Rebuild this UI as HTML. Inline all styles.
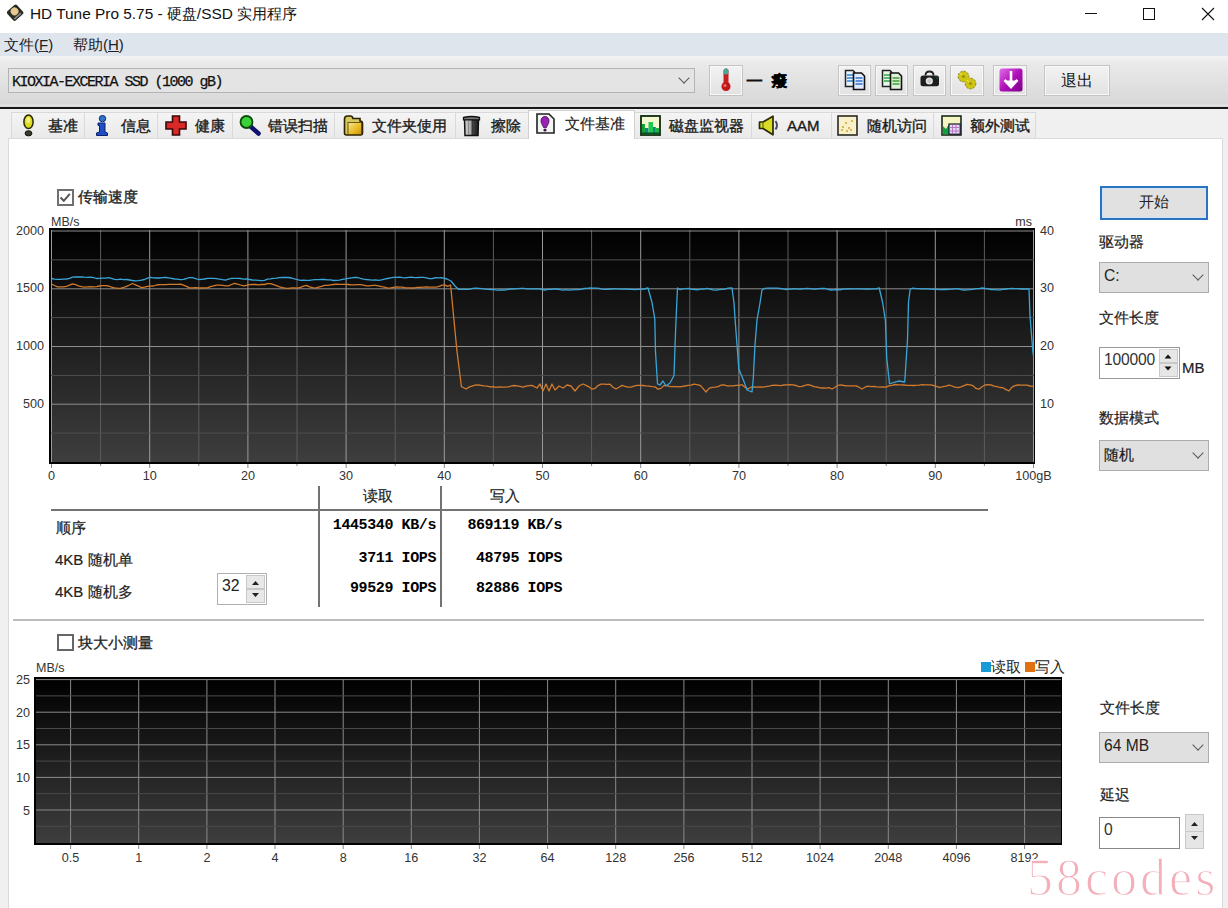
<!DOCTYPE html>
<html><head><meta charset="utf-8">
<style>
*{box-sizing:border-box}
html,body{margin:0;padding:0}
body{width:1228px;height:908px;overflow:hidden;background:#f0f0f0;position:relative;font-family:"Liberation Sans",sans-serif;color:#000;font-size:15px}
.a{position:absolute;white-space:nowrap}
#title{left:0;top:0;width:1228px;height:33px;background:#fff}
#menu{left:0;top:33px;width:1228px;height:23px;background:#dfe5ec}
#tool{left:0;top:56px;width:1228px;height:51px;background:linear-gradient(#f3f3f3 0px,#f0f0f0 4px,#ebebeb 5px,#d8d8d8 48px,#e6e6e6 49px,#d6d6d6 51px)}
#darkline{left:0;top:107px;width:1228px;height:2px;background:#181818}
#panel{left:8px;top:138px;width:1215px;height:780px;background:#fff;border:1px solid #dadada}
.tab{position:absolute;top:112px;height:27px;background:linear-gradient(#f4f4f4,#e9e9e9);border:1px solid #d9d9d9;border-bottom:none}
.tab.act{top:110px;height:29px;background:#fff;border-color:#d0d0d0}
.tabt{position:absolute;top:4px;font-size:15px;color:#222}
.btn{position:absolute;border:1px solid #c4c4c4;background:linear-gradient(#f2f2f2,#e2e2e2);box-shadow:inset 0 0 0 1px #f8f8f8}
.combo{position:absolute;background:#e0e0e0;border:1px solid #ababab}
.chev{position:absolute;width:8px;height:8px;border-right:1.7px solid #585858;border-bottom:1.7px solid #585858;transform:rotate(45deg)}
.lbl{font-size:15px;color:#222;-webkit-text-stroke:0.2px #222}
.mono{font-family:"Liberation Mono",monospace;font-weight:bold}
</style></head><body>
<div id="title" class="a"></div>
<!-- title icon -->
<svg class="a" style="left:5px;top:4px" width="20" height="18" viewBox="0 0 20 18">
<g transform="rotate(-42 10 8.5)"><rect x="3.5" y="2.5" width="13" height="12.5" rx="2" fill="#2a2a22"/><circle cx="10.5" cy="7.3" r="3.9" fill="#e6c890"/><rect x="5" y="12" width="9" height="1.8" fill="#888"/></g></svg>
<div class="a" style="left:30px;top:4px;font-size:15.4px;color:#111">HD Tune Pro 5.75 - 硬盘/SSD 实用程序</div>
<svg class="a" style="left:1080px;top:0" width="148" height="30" viewBox="1080 0 148 30">
<line x1="1085" y1="13.5" x2="1097" y2="13.5" stroke="#111" stroke-width="1"/>
<rect x="1143.5" y="8.5" width="11" height="11" fill="none" stroke="#111" stroke-width="1"/>
<path d="M1202 8 L1214 20 M1214 8 L1202 20" stroke="#111" stroke-width="1.1"/>
</svg>
<div id="menu" class="a"></div>
<div class="a" style="left:4px;top:36px;font-size:15px;color:#222">文件(<u>F</u>)</div>
<div class="a" style="left:73px;top:36px;font-size:15px;color:#222">帮助(<u>H</u>)</div>
<div id="tool" class="a"></div>
<!-- drive combo -->
<div class="combo" style="left:8px;top:68px;width:687px;height:25px;background:#e4e4e4;border-color:#b4b4b4"></div>
<div class="a mono" style="left:12px;top:74px;font-size:15px;color:#111;letter-spacing:-1.5px;font-weight:normal;-webkit-text-stroke:0.25px #111">KIOXIA-EXCERIA SSD (1000 gB)</div>
<div class="chev" style="left:680px;top:74px"></div>
<!-- thermometer button -->
<div class="btn" style="left:709px;top:65px;width:34px;height:31px"></div>
<svg class="a" style="left:718px;top:67px" width="16" height="25" viewBox="0 0 16 25">
<rect x="5.5" y="1.5" width="5" height="17" rx="2.5" fill="#c42020"/><rect x="5.5" y="1.5" width="5" height="6" rx="2.5" fill="#4aa898"/><circle cx="8" cy="19.5" r="4.5" fill="#c01818"/><circle cx="7" cy="18.5" r="1.5" fill="#f07070"/></svg>
<div class="a" style="left:746px;top:70px;font-size:17px;font-weight:bold;color:#111">一</div>
<div class="a" style="left:772px;top:72px;font-size:15px;font-weight:bold;color:#000;-webkit-text-stroke:0.6px #000">癈</div>
<!-- toolbar buttons -->
<div class="btn" style="left:838px;top:65px;width:33px;height:31px"></div>
<div class="btn" style="left:875px;top:65px;width:33px;height:31px"></div>
<div class="btn" style="left:913px;top:65px;width:33px;height:31px"></div>
<div class="btn" style="left:950px;top:65px;width:34px;height:31px"></div>
<div class="btn" style="left:993px;top:65px;width:34px;height:31px"></div>
<div class="btn" style="left:1044px;top:65px;width:66px;height:31px"></div>
<div class="a" style="left:1061px;top:71px;font-size:16px;color:#111">退出</div>

<svg class="a" style="left:844px;top:69px" width="22" height="22" viewBox="0 0 22 22"><path d="M1.5 1.5 L9 1.5 L10.5 3 L10.5 17.5 L1.5 17.5 Z" fill="#e8f4ff" stroke="#222" stroke-width="1.5"/><path d="M3 6 L9 6 M3 9 L9 9 M3 12 L9 12" stroke="#3080d0" stroke-width="1.3"/><path d="M9.5 4 L17.5 4 L20.5 7 L20.5 20.5 L9.5 20.5 Z" fill="#dfeaff" stroke="#111" stroke-width="1.6"/><path d="M11.5 9 L18.5 9 M11.5 12 L18.5 12 M11.5 15 L18.5 15" stroke="#2f70c8" stroke-width="1.3"/></svg>
<svg class="a" style="left:881px;top:69px" width="22" height="22" viewBox="0 0 22 22"><path d="M1.5 1.5 L9 1.5 L10.5 3 L10.5 17.5 L1.5 17.5 Z" fill="#e8f8e8" stroke="#222" stroke-width="1.5"/><path d="M3 6 L9 6 M3 9 L9 9 M3 12 L9 12" stroke="#30a040" stroke-width="1.5"/><path d="M9.5 4 L17.5 4 L20.5 7 L20.5 20.5 L9.5 20.5 Z" fill="#e0f0d8" stroke="#111" stroke-width="1.6"/><path d="M11.5 9 L18.5 9 M11.5 12 L18.5 12 M11.5 15 L18.5 15" stroke="#38a030" stroke-width="1.5"/></svg>
<svg class="a" style="left:919px;top:70px" width="22" height="18" viewBox="0 0 22 18"><path d="M6.5 5.5 Q6.5 1.5 10.5 1.5 Q14.5 1.5 14.5 5.5" fill="none" stroke="#222" stroke-width="1.8"/><rect x="1.5" y="5.5" width="18.5" height="10.8" rx="2.5" fill="#1e1e1e"/><path d="M15 6.5 L19.5 6.5 L19.5 10 Z" fill="#1a4030"/><circle cx="10.3" cy="11" r="3.6" fill="#e4e4e4"/><circle cx="10.3" cy="11" r="2" fill="#c8c8c8"/></svg>
<svg class="a" style="left:955px;top:69px" width="24" height="22" viewBox="0 0 24 22"><g stroke="#7a7400" stroke-width="1" fill="#cfc414"><circle cx="8.5" cy="7.5" r="5.3" stroke-dasharray="2.2 1.3"/><circle cx="15.5" cy="14.5" r="5.3" stroke-dasharray="2.2 1.3"/></g><g fill="#cfc414"><circle cx="8.5" cy="7.5" r="4.8"/><circle cx="15.5" cy="14.5" r="4.8"/><rect x="9" y="8" width="6" height="6" transform="rotate(45 12 11)"/></g><g fill="#8a8000" opacity="0.7"><circle cx="8.5" cy="7.5" r="1.6"/><circle cx="15.5" cy="14.5" r="1.6"/></g><path d="M5 4 L7 6 M12 11 L14 13" stroke="#f0ec60" stroke-width="1"/></svg>
<svg class="a" style="left:999px;top:68px" width="24" height="24" viewBox="0 0 24 24"><defs><linearGradient id="pg" x1="0" y1="0" x2="1" y2="1"><stop offset="0" stop-color="#e070e8"/><stop offset="0.5" stop-color="#b010b8"/><stop offset="1" stop-color="#7a0088"/></linearGradient></defs><rect x="0.5" y="0.5" width="23" height="23" rx="2.5" fill="url(#pg)"/><path d="M12 3 L12 17 M5.5 12 L12 19 L18.5 12" fill="none" stroke="#fff" stroke-width="2.6"/><path d="M6 12.5 L12 20 L18 12.5 Z" fill="#fff"/></svg>

<div id="darkline" class="a"></div>
<!-- tabs -->
<div class="tab" style="left:11px;width:73.5px"></div><div class="a lbl" style="left:47.6px;top:117px;color:#1a1a1a;-webkit-text-stroke:0.35px #1a1a1a">基准</div><svg class="a" style="left:22px;top:114px" width="13" height="23" viewBox="0 0 13 23"><ellipse cx="6.5" cy="7.8" rx="4.6" ry="6.8" fill="#dede20" stroke="#2a2a08" stroke-width="1.5"/><ellipse cx="6.3" cy="6" rx="2" ry="3" fill="#f4f080"/><ellipse cx="6.5" cy="19.3" rx="3.4" ry="2.6" fill="#3a3a2a" stroke="#111" stroke-width="1"/></svg><div class="tab" style="left:83.5px;width:74.5px"></div><div class="a lbl" style="left:120.5px;top:117px;color:#1a1a1a;-webkit-text-stroke:0.35px #1a1a1a">信息</div><svg class="a" style="left:95px;top:115px" width="14" height="21" viewBox="0 0 14 21"><circle cx="7.5" cy="3.6" r="3.2" fill="#2f74c8" stroke="#0c2a70" stroke-width="1"/><path d="M3 8 L10 8 L10 17 L12.5 18 L12.5 20.5 L1.5 20.5 L1.5 18 L4.5 17 L4.5 10.5 L3 10.5 Z" fill="#1e4fc0" stroke="#0a1f70" stroke-width="1"/></svg><div class="tab" style="left:157px;width:76px"></div><div class="a lbl" style="left:195px;top:117px;color:#1a1a1a;-webkit-text-stroke:0.35px #1a1a1a">健康</div><svg class="a" style="left:165px;top:115px" width="22" height="21" viewBox="0 0 22 21"><path d="M7.5 1 L14.5 1 L14.5 7 L21 7 L21 14 L14.5 14 L14.5 20 L7.5 20 L7.5 14 L1 14 L1 7 L7.5 7 Z" fill="#d82828" stroke="#3a0808" stroke-width="1.6"/></svg><div class="tab" style="left:232px;width:102.5px"></div><div class="a lbl" style="left:268.4px;top:117px;color:#1a1a1a;-webkit-text-stroke:0.35px #1a1a1a">错误扫描</div><svg class="a" style="left:239px;top:115px" width="23" height="21" viewBox="0 0 23 21"><path d="M11 11 L19.5 18.5" stroke="#101070" stroke-width="4.5" stroke-linecap="round"/><circle cx="7.5" cy="7" r="6" fill="#3cd03c" stroke="#0a4a0a" stroke-width="1.8"/></svg><div class="tab" style="left:333.5px;width:122.5px"></div><div class="a lbl" style="left:372.2px;top:117px;color:#1a1a1a;-webkit-text-stroke:0.35px #1a1a1a">文件夹使用</div><svg class="a" style="left:343px;top:115px" width="21" height="21" viewBox="0 0 21 21"><defs><linearGradient id="fg" x1="0" y1="0" x2="1" y2="1"><stop offset="0" stop-color="#f8e890"/><stop offset="0.6" stop-color="#e8b820"/><stop offset="1" stop-color="#c09010"/></linearGradient></defs><path d="M1.5 4 Q1.5 1 4.5 1 L7.5 1 Q9.5 1 10 3.5 L17 3.5 L17 6 Q19.5 6 19.5 8.5 L19.5 18 Q19.5 20 17.5 20 L3.5 20 Q1.5 20 1.5 18 Z" fill="#d8c860" stroke="#2a2200" stroke-width="1.6"/><rect x="5" y="7.5" width="13.5" height="12" fill="url(#fg)" stroke="#4a3a00" stroke-width="0.8"/></svg><div class="tab" style="left:455px;width:74px"></div><div class="a lbl" style="left:491.4px;top:117px;color:#1a1a1a;-webkit-text-stroke:0.35px #1a1a1a">擦除</div><svg class="a" style="left:462px;top:115px" width="19" height="22" viewBox="0 0 19 22"><defs><linearGradient id="tg" x1="0" y1="0" x2="1" y2="0"><stop offset="0" stop-color="#d0d0d0"/><stop offset="0.45" stop-color="#a8a8a8"/><stop offset="0.55" stop-color="#3a3a3a"/><stop offset="1" stop-color="#222"/></linearGradient></defs><path d="M2.5 4 L16.5 4 L16 20.5 L3 20.5 Z" fill="url(#tg)" stroke="#111" stroke-width="1.5"/><path d="M1.5 2.5 Q9.5 0.5 17.5 2.5 L17.5 4.8 L1.5 4.8 Z" fill="#777" stroke="#111" stroke-width="1.3"/><path d="M6.5 6 L6.5 19.5 M12 6 L12 19.5" stroke="#555" stroke-width="0.8" opacity="0.6"/></svg><div class="tab" style="left:634px;width:118px"></div><div class="a lbl" style="left:669px;top:117px;color:#1a1a1a;-webkit-text-stroke:0.35px #1a1a1a">磁盘监视器</div><svg class="a" style="left:640px;top:115px" width="21" height="21" viewBox="0 0 21 21"><rect x="1" y="1" width="19" height="19" fill="#f4f8d0" stroke="#0e2a0e" stroke-width="1.8"/><rect x="1.9" y="9" width="3" height="10.2" fill="#10a030"/><rect x="4.9" y="13" width="3.6" height="6.2" fill="#108880"/><rect x="8.5" y="7" width="4.5" height="12.2" fill="#20c850"/><rect x="13" y="12" width="2.8" height="7.2" fill="#108878"/><rect x="15.8" y="13" width="3.3" height="6.2" fill="#20b048"/><rect x="1.9" y="17.5" width="17.2" height="1.7" fill="#0a4a20"/></svg><div class="tab" style="left:751px;width:80.5px"></div><div class="a lbl" style="left:787px;top:117px;color:#1a1a1a;-webkit-text-stroke:0.35px #1a1a1a">AAM</div><svg class="a" style="left:758px;top:115px" width="23" height="21" viewBox="0 0 23 21"><path d="M1.5 7 L5 7 L15 1.2 L15 19.8 L5 13.5 L1.5 13.5 Z" fill="#d8dc28" stroke="#2a2a08" stroke-width="1.7" stroke-linejoin="round"/><path d="M5 7.5 L5 13" stroke="#5a5a10" stroke-width="1"/><path d="M17.5 6 Q20.5 10.3 17.5 14.5" fill="none" stroke="#4a4a60" stroke-width="2"/></svg><div class="tab" style="left:830.5px;width:103.0px"></div><div class="a lbl" style="left:866.8px;top:117px;color:#1a1a1a;-webkit-text-stroke:0.35px #1a1a1a">随机访问</div><svg class="a" style="left:837px;top:115px" width="21" height="21" viewBox="0 0 21 21"><rect x="1" y="1" width="19" height="19" fill="#f8f0c8" stroke="#2a2a20" stroke-width="1.6"/><g fill="#d0a030"><circle cx="6" cy="12" r="1"/><circle cx="9" cy="8" r="1"/><circle cx="12" cy="13" r="1"/><circle cx="15" cy="6" r="1"/><circle cx="14" cy="15" r="1"/><circle cx="5" cy="15" r="1"/><circle cx="10" cy="16" r="1"/></g></svg><div class="tab" style="left:932.5px;width:103.5px"></div><div class="a lbl" style="left:970.2px;top:117px;color:#1a1a1a;-webkit-text-stroke:0.35px #1a1a1a">额外测试</div><svg class="a" style="left:941px;top:115px" width="21" height="21" viewBox="0 0 21 21"><rect x="1" y="1" width="19" height="19" fill="#f4f4c0" stroke="#1a2a1a" stroke-width="1.6"/><path d="M1.8 19.2 L1.8 11 L5 14 L8 9 L8 19.2 Z" fill="#10a040"/><rect x="8" y="9" width="11.2" height="10.2" fill="#e8d8f0" stroke="#1a1a30" stroke-width="1.2"/><path d="M11.5 10 L11.5 19 M15 10 L15 19 M8.5 12.5 L19 12.5 M8.5 16 L19 16" stroke="#b070c0" stroke-width="0.9"/></svg>
<div id="panel" class="a"></div>
<!-- active tab drawn over panel top border -->
<div class="tab act" style="left:528px;width:107px;border-bottom:none"></div><div class="a lbl" style="left:564.7px;top:115px;color:#222">文件基准</div><svg class="a" style="left:536px;top:113px" width="19" height="21" viewBox="0 0 19 21"><path d="M1 1 L13 1 L18 6 L18 20 L1 20 Z" fill="#f4f4f4" stroke="#222" stroke-width="1.6"/><path d="M9 3.5 C12 3.5 13 6 13 8 C13 10.5 11 12.5 10.5 14.5 L7.5 14.5 C7 12.5 5 10.5 5 8 C5 6 6 3.5 9 3.5Z" fill="#9a20b8" stroke="#40104a" stroke-width="0.8"/><circle cx="9" cy="17" r="1.6" fill="#40104a"/></svg>
<!-- checkbox 1 -->
<div class="a" style="left:57px;top:189px;width:16.5px;height:16.5px;border:2px solid #707070;background:#fff"></div>
<svg class="a" style="left:57px;top:189px" width="16" height="16"><path d="M3.5 8.5 L6.8 11.8 L12.8 4.8" fill="none" stroke="#555" stroke-width="2"/></svg>
<div class="a lbl" style="left:78px;top:188px;-webkit-text-stroke:0.35px #222">传输速度</div>
<svg class="a" style="left:0;top:0" width="1228" height="908" viewBox="0 0 1228 908">
<defs><linearGradient id="cg" x1="0" y1="0" x2="0" y2="1"><stop offset="0" stop-color="#000"/><stop offset="1" stop-color="#3e3e3e"/></linearGradient></defs>
<rect x="49" y="228" width="986" height="236" fill="#000"/>
<rect x="51" y="230" width="983" height="232" fill="url(#cg)"/>
<line x1="51.5" y1="230" x2="51.5" y2="462" stroke="#9a9a9a" stroke-width="1"/>
<line x1="51.5" y1="464" x2="51.5" y2="468" stroke="#888" stroke-width="1"/>
<line x1="100.6" y1="230" x2="100.6" y2="462" stroke="#5c5c5c" stroke-width="1"/>
<line x1="100.6" y1="464" x2="100.6" y2="466" stroke="#888" stroke-width="1"/>
<line x1="149.7" y1="230" x2="149.7" y2="462" stroke="#9a9a9a" stroke-width="1"/>
<line x1="149.7" y1="464" x2="149.7" y2="468" stroke="#888" stroke-width="1"/>
<line x1="198.8" y1="230" x2="198.8" y2="462" stroke="#5c5c5c" stroke-width="1"/>
<line x1="198.8" y1="464" x2="198.8" y2="466" stroke="#888" stroke-width="1"/>
<line x1="247.9" y1="230" x2="247.9" y2="462" stroke="#9a9a9a" stroke-width="1"/>
<line x1="247.9" y1="464" x2="247.9" y2="468" stroke="#888" stroke-width="1"/>
<line x1="297.0" y1="230" x2="297.0" y2="462" stroke="#5c5c5c" stroke-width="1"/>
<line x1="297.0" y1="464" x2="297.0" y2="466" stroke="#888" stroke-width="1"/>
<line x1="346.1" y1="230" x2="346.1" y2="462" stroke="#9a9a9a" stroke-width="1"/>
<line x1="346.1" y1="464" x2="346.1" y2="468" stroke="#888" stroke-width="1"/>
<line x1="395.2" y1="230" x2="395.2" y2="462" stroke="#5c5c5c" stroke-width="1"/>
<line x1="395.2" y1="464" x2="395.2" y2="466" stroke="#888" stroke-width="1"/>
<line x1="444.3" y1="230" x2="444.3" y2="462" stroke="#9a9a9a" stroke-width="1"/>
<line x1="444.3" y1="464" x2="444.3" y2="468" stroke="#888" stroke-width="1"/>
<line x1="493.4" y1="230" x2="493.4" y2="462" stroke="#5c5c5c" stroke-width="1"/>
<line x1="493.4" y1="464" x2="493.4" y2="466" stroke="#888" stroke-width="1"/>
<line x1="542.5" y1="230" x2="542.5" y2="462" stroke="#9a9a9a" stroke-width="1"/>
<line x1="542.5" y1="464" x2="542.5" y2="468" stroke="#888" stroke-width="1"/>
<line x1="591.6" y1="230" x2="591.6" y2="462" stroke="#5c5c5c" stroke-width="1"/>
<line x1="591.6" y1="464" x2="591.6" y2="466" stroke="#888" stroke-width="1"/>
<line x1="640.7" y1="230" x2="640.7" y2="462" stroke="#9a9a9a" stroke-width="1"/>
<line x1="640.7" y1="464" x2="640.7" y2="468" stroke="#888" stroke-width="1"/>
<line x1="689.8" y1="230" x2="689.8" y2="462" stroke="#5c5c5c" stroke-width="1"/>
<line x1="689.8" y1="464" x2="689.8" y2="466" stroke="#888" stroke-width="1"/>
<line x1="738.9" y1="230" x2="738.9" y2="462" stroke="#9a9a9a" stroke-width="1"/>
<line x1="738.9" y1="464" x2="738.9" y2="468" stroke="#888" stroke-width="1"/>
<line x1="788.0" y1="230" x2="788.0" y2="462" stroke="#5c5c5c" stroke-width="1"/>
<line x1="788.0" y1="464" x2="788.0" y2="466" stroke="#888" stroke-width="1"/>
<line x1="837.1" y1="230" x2="837.1" y2="462" stroke="#9a9a9a" stroke-width="1"/>
<line x1="837.1" y1="464" x2="837.1" y2="468" stroke="#888" stroke-width="1"/>
<line x1="886.2" y1="230" x2="886.2" y2="462" stroke="#5c5c5c" stroke-width="1"/>
<line x1="886.2" y1="464" x2="886.2" y2="466" stroke="#888" stroke-width="1"/>
<line x1="935.3" y1="230" x2="935.3" y2="462" stroke="#9a9a9a" stroke-width="1"/>
<line x1="935.3" y1="464" x2="935.3" y2="468" stroke="#888" stroke-width="1"/>
<line x1="984.4" y1="230" x2="984.4" y2="462" stroke="#5c5c5c" stroke-width="1"/>
<line x1="984.4" y1="464" x2="984.4" y2="466" stroke="#888" stroke-width="1"/>
<line x1="1033.5" y1="230" x2="1033.5" y2="462" stroke="#9a9a9a" stroke-width="1"/>
<line x1="1033.5" y1="464" x2="1033.5" y2="468" stroke="#888" stroke-width="1"/>
<line x1="51" y1="433.1" x2="1034" y2="433.1" stroke="#4e4e4e" stroke-width="1"/>
<line x1="51" y1="404.2" x2="1034" y2="404.2" stroke="#8e8e8e" stroke-width="1"/>
<line x1="51" y1="375.4" x2="1034" y2="375.4" stroke="#4e4e4e" stroke-width="1"/>
<line x1="51" y1="346.5" x2="1034" y2="346.5" stroke="#8e8e8e" stroke-width="1"/>
<line x1="51" y1="317.6" x2="1034" y2="317.6" stroke="#4e4e4e" stroke-width="1"/>
<line x1="51" y1="288.8" x2="1034" y2="288.8" stroke="#8e8e8e" stroke-width="1"/>
<line x1="51" y1="259.9" x2="1034" y2="259.9" stroke="#4e4e4e" stroke-width="1"/>
<line x1="51" y1="231.0" x2="1034" y2="231.0" stroke="#8e8e8e" stroke-width="1"/>
<polyline points="51.5,284.0 54.5,285.5 57.5,286.9 60.5,286.9 63.5,286.8 66.5,286.3 69.5,285.2 72.5,283.8 75.5,284.6 78.5,285.8 81.5,286.7 84.5,287.1 87.5,286.9 90.5,286.7 93.5,286.9 96.5,286.6 99.5,286.0 102.5,285.7 105.5,285.7 108.5,286.0 111.5,287.1 114.5,287.8 117.5,288.1 120.5,288.3 123.5,287.5 126.5,286.4 129.5,285.0 132.5,283.5 135.5,284.8 138.5,286.2 141.5,287.6 144.5,287.1 147.5,286.4 150.5,286.1 153.5,286.0 156.5,285.0 159.5,284.7 162.5,284.6 165.5,284.7 168.5,284.3 171.5,284.4 174.5,284.3 177.5,284.3 180.5,284.2 183.5,285.1 186.5,286.4 189.5,287.8 192.5,287.9 195.5,287.6 198.5,287.8 201.5,288.0 204.5,287.9 207.5,287.9 210.5,286.6 213.5,285.8 216.5,285.1 219.5,285.1 222.5,285.4 225.5,285.8 228.5,285.8 231.5,284.5 234.5,283.3 237.5,284.1 240.5,285.0 243.5,285.9 246.5,285.3 249.5,284.7 252.5,284.4 255.5,284.5 258.5,284.9 261.5,284.5 264.5,284.5 267.5,283.7 270.5,283.7 273.5,284.7 276.5,285.7 279.5,286.8 282.5,287.7 285.5,288.1 288.5,288.3 291.5,287.9 294.5,287.9 297.5,288.1 300.5,287.3 303.5,286.1 306.5,285.4 309.5,286.8 312.5,287.6 315.5,288.1 318.5,287.1 321.5,286.4 324.5,285.3 327.5,285.3 330.5,284.9 333.5,284.5 336.5,284.1 339.5,284.3 342.5,284.4 345.5,284.4 348.5,284.5 351.5,284.9 354.5,284.9 357.5,284.7 360.5,284.6 363.5,285.2 366.5,285.9 369.5,285.8 372.5,285.4 375.5,285.3 378.5,285.8 381.5,286.7 384.5,287.1 387.5,288.1 390.5,287.8 393.5,287.3 396.5,286.8 399.5,287.1 402.5,287.1 405.5,287.8 408.5,287.9 411.5,288.0 414.5,287.9 417.5,287.3 420.5,287.4 423.5,287.2 426.5,287.0 429.5,287.1 432.5,287.2 435.5,287.2 438.5,286.6 441.5,285.4 444.5,284.9 447.5,286.4 450.6,285.0 453.3,313.0 456.9,350.6 461.4,386.5 466.0,389.0 469.0,387.1 472.0,386.1 475.0,385.1 478.0,385.0 481.0,385.3 484.0,385.8 487.0,386.1 490.0,386.8 493.0,386.6 496.0,387.3 499.0,386.9 502.0,387.1 505.0,387.2 508.0,386.8 511.0,386.2 514.0,385.5 517.0,385.9 520.0,386.4 523.0,387.2 526.0,386.2 529.0,385.7 532.0,385.4 537.0,388.0 540.0,384.0 543.0,391.0 546.0,384.0 549.0,391.0 552.0,384.0 555.0,390.0 559.0,386.0 563.0,388.0 567.0,385.0 571.0,386.0 575.0,391.0 579.0,386.0 583.0,384.0 586.0,385.4 589.0,386.8 592.0,389.2 595.0,388.4 598.0,385.6 601.0,384.2 604.0,384.2 607.0,384.3 610.0,384.2 613.0,387.2 616.0,389.0 619.0,387.2 622.0,385.4 625.0,386.4 628.0,387.1 631.0,387.2 634.0,386.1 637.0,385.4 640.0,385.4 643.0,385.5 646.0,385.9 649.0,386.2 652.0,386.7 655.0,386.8 658.0,389.2 661.0,388.4 664.0,385.4 667.0,385.6 670.0,386.6 673.0,386.7 676.0,386.6 679.0,386.8 682.0,386.5 685.0,386.0 688.0,385.4 691.0,385.1 694.0,384.1 697.0,384.7 700.0,385.3 703.0,388.4 706.0,392.0 709.0,388.4 712.0,387.4 715.0,387.2 718.0,386.6 721.0,385.2 724.0,384.9 727.0,385.8 730.0,385.8 733.0,385.9 736.0,385.4 739.0,385.3 742.0,384.7 745.0,387.2 748.0,389.0 751.0,387.2 754.0,387.0 757.0,387.2 760.0,386.8 763.0,387.2 766.0,386.7 769.0,386.2 772.0,385.4 775.0,385.2 778.0,385.4 781.0,385.7 784.0,385.0 787.0,384.9 790.0,384.7 793.0,384.8 796.0,385.5 799.0,386.6 802.0,386.4 805.0,385.3 808.0,384.6 811.0,385.3 814.0,386.6 817.0,387.0 820.0,387.9 823.0,388.0 826.0,388.1 829.0,387.7 832.0,389.0 835.0,387.2 838.0,385.3 841.0,384.8 844.0,385.5 847.0,385.8 850.0,385.8 853.0,385.8 856.0,385.8 859.0,387.2 862.0,389.0 865.0,387.2 868.0,386.2 871.0,386.6 874.0,386.4 877.0,386.9 880.0,387.2 883.0,387.0 886.0,387.2 889.0,385.8 892.0,385.3 895.0,384.5 898.0,384.8 901.0,384.8 904.0,385.0 907.0,385.3 910.0,385.3 913.0,385.5 916.0,385.4 919.0,385.2 922.0,384.7 925.0,384.9 928.0,384.9 931.0,384.8 934.0,385.6 937.0,386.7 940.0,387.5 943.0,386.6 946.0,386.1 949.0,385.1 952.0,386.0 955.0,387.1 958.0,387.6 961.0,386.8 964.0,385.6 967.0,384.4 970.0,384.8 973.0,385.7 976.0,388.4 979.0,389.2 982.0,386.8 985.0,385.0 988.0,384.7 991.0,384.8 994.0,386.2 997.0,386.6 1000.0,387.5 1003.0,387.7 1006.0,389.6 1009.0,390.8 1012.0,387.2 1015.0,385.7 1018.0,385.0 1021.0,385.1 1024.0,385.2 1027.0,385.2 1030.0,386.0 1033.0,386.4" fill="none" stroke="#d27a2c" stroke-width="1.3" stroke-linejoin="round"/>
<polyline points="51.5,278.5 54.5,279.1 57.5,279.3 60.5,279.4 63.5,279.2 66.5,279.0 69.5,278.3 72.5,277.1 75.5,277.0 78.5,277.0 81.5,277.0 84.5,277.2 87.5,277.3 90.5,277.1 93.5,277.6 96.5,278.5 99.5,278.4 102.5,278.2 105.5,278.1 108.5,277.7 111.5,278.4 114.5,279.3 117.5,279.6 120.5,279.2 123.5,279.6 126.5,279.5 129.5,280.0 132.5,280.5 135.5,280.8 138.5,280.6 141.5,280.2 144.5,279.5 147.5,278.1 150.5,277.4 153.5,277.8 156.5,278.0 159.5,278.0 162.5,277.7 165.5,277.5 168.5,277.8 171.5,278.3 174.5,279.0 177.5,279.2 180.5,279.6 183.5,279.3 186.5,278.5 189.5,277.6 192.5,277.6 195.5,278.6 198.5,279.5 201.5,279.4 204.5,279.0 207.5,278.3 210.5,278.4 213.5,278.4 216.5,278.6 219.5,279.2 222.5,279.7 225.5,280.1 228.5,279.1 231.5,278.4 234.5,278.3 237.5,278.3 240.5,278.5 243.5,279.1 246.5,279.0 249.5,279.5 252.5,280.0 255.5,280.2 258.5,280.4 261.5,280.6 264.5,280.4 267.5,279.2 270.5,278.8 273.5,278.3 276.5,278.2 279.5,277.6 282.5,277.3 285.5,277.5 288.5,277.5 291.5,278.0 294.5,278.9 297.5,279.7 300.5,280.3 303.5,280.1 306.5,280.4 309.5,280.3 312.5,279.9 315.5,279.6 318.5,279.6 321.5,279.4 324.5,279.5 327.5,279.8 330.5,279.8 333.5,280.5 336.5,280.4 339.5,280.1 342.5,279.3 345.5,278.9 348.5,278.4 351.5,277.9 354.5,277.4 357.5,277.5 360.5,278.4 363.5,279.1 366.5,279.5 369.5,279.8 372.5,280.1 375.5,279.9 378.5,280.4 381.5,279.9 384.5,279.1 387.5,278.5 390.5,277.9 393.5,277.3 396.5,277.3 399.5,277.2 402.5,277.7 405.5,277.9 408.5,277.4 411.5,277.2 414.5,277.6 417.5,277.5 420.5,277.3 423.5,277.4 426.5,277.9 429.5,278.7 432.5,278.5 435.5,277.7 438.5,277.8 441.5,277.7 447.0,279.0 451.0,281.0 455.0,286.0 458.7,289.4 461.0,289.3 464.0,289.3 467.0,289.3 470.0,289.2 473.0,288.4 476.0,288.1 479.0,288.4 482.0,288.7 485.0,289.1 488.0,289.3 491.0,289.5 494.0,289.7 497.0,290.1 500.0,289.9 503.0,290.0 506.0,289.9 509.0,289.2 512.0,289.0 515.0,288.9 518.0,288.7 521.0,288.3 524.0,288.4 527.0,288.8 530.0,288.8 533.0,288.9 536.0,288.7 539.0,288.9 542.0,289.5 545.0,290.0 548.0,289.4 551.0,289.4 554.0,289.0 557.0,289.0 560.0,289.7 563.0,290.1 566.0,289.6 569.0,290.1 572.0,289.8 575.0,289.6 578.0,289.6 581.0,289.3 584.0,288.5 587.0,288.3 590.0,288.0 593.0,288.1 596.0,288.1 599.0,288.3 602.0,289.2 605.0,289.3 608.0,289.3 611.0,289.0 614.0,288.7 617.0,288.9 620.0,289.2 623.0,289.1 626.0,288.8 629.0,289.3 632.0,289.3 635.0,289.6 638.0,289.3 641.0,289.3 644.0,289.0 648.0,288.0 652.0,302.5 654.8,319.0 655.5,352.0 657.5,383.8 660.0,385.0 663.0,381.0 666.0,386.0 670.0,383.0 674.0,375.5 675.5,332.8 676.8,302.5 677.5,288.0 680.0,289.6 683.0,288.8 686.0,288.7 689.0,288.5 692.0,289.3 695.0,289.5 698.0,289.9 701.0,289.0 704.0,289.1 707.0,288.4 710.0,289.0 713.0,289.8 716.0,290.1 719.0,289.6 722.0,289.3 725.0,289.1 728.0,288.2 732.0,288.0 734.0,303.0 735.0,318.0 737.0,345.0 738.8,368.7 744.3,382.4 747.0,390.0 752.0,392.0 753.3,378.0 755.0,345.0 757.0,320.0 760.0,303.0 762.0,290.0 765.0,288.3 768.0,288.2 771.0,288.1 774.0,288.2 777.0,288.2 780.0,288.5 783.0,288.8 786.0,289.5 789.0,289.2 792.0,289.0 795.0,288.7 798.0,289.1 801.0,289.0 804.0,288.7 807.0,288.4 810.0,288.7 813.0,289.2 816.0,289.2 819.0,288.7 822.0,288.5 825.0,288.5 828.0,289.4 831.0,290.0 834.0,289.8 837.0,289.5 840.0,289.8 843.0,289.2 846.0,289.0 849.0,288.7 852.0,288.8 855.0,288.8 858.0,288.8 861.0,288.8 864.0,289.2 867.0,289.0 870.0,289.1 873.0,288.8 876.0,288.8 879.2,288.0 882.6,302.5 885.4,320.5 886.7,357.6 889.5,383.8 895.0,382.0 898.5,381.0 904.7,382.0 905.5,370.0 907.5,340.0 908.5,302.0 910.2,289.0 913.0,288.1 916.0,288.6 919.0,288.7 922.0,288.9 925.0,288.9 928.0,288.9 931.0,289.1 934.0,289.4 937.0,289.3 940.0,289.7 943.0,289.5 946.0,289.5 949.0,289.3 952.0,289.2 955.0,288.9 958.0,288.6 961.0,289.6 964.0,290.0 967.0,289.8 970.0,289.6 973.0,289.4 976.0,288.6 979.0,288.6 982.0,288.0 985.0,288.3 988.0,288.9 991.0,289.7 994.0,289.6 997.0,289.8 1000.0,289.8 1003.0,289.4 1006.0,289.0 1009.0,288.7 1012.0,288.5 1015.0,288.6 1018.0,288.7 1021.0,289.0 1024.0,288.8 1029.0,289.0 1030.0,316.0 1032.9,352.0 1033.5,356.0" fill="none" stroke="#3aa6d8" stroke-width="1.3" stroke-linejoin="round"/>
<text x="44" y="234.5" text-anchor="end" font-size="12.6" font-family="Liberation Sans" fill="#333">2000</text>
<text x="44" y="292.2" text-anchor="end" font-size="12.6" font-family="Liberation Sans" fill="#333">1500</text>
<text x="44" y="350.0" text-anchor="end" font-size="12.6" font-family="Liberation Sans" fill="#333">1000</text>
<text x="44" y="407.8" text-anchor="end" font-size="12.6" font-family="Liberation Sans" fill="#333">500</text>
<text x="1040" y="234.5" font-size="12.6" font-family="Liberation Sans" fill="#333">40</text>
<text x="1040" y="292.2" font-size="12.6" font-family="Liberation Sans" fill="#333">30</text>
<text x="1040" y="350.0" font-size="12.6" font-family="Liberation Sans" fill="#333">20</text>
<text x="1040" y="407.8" font-size="12.6" font-family="Liberation Sans" fill="#333">10</text>
<text x="51" y="226" font-size="12.5" font-family="Liberation Sans" fill="#333">MB/s</text>
<text x="1032" y="226" text-anchor="end" font-size="12.5" font-family="Liberation Sans" fill="#333">ms</text>
<text x="51.5" y="480" text-anchor="middle" font-size="12.6" font-family="Liberation Sans" fill="#333">0</text>
<text x="149.7" y="480" text-anchor="middle" font-size="12.6" font-family="Liberation Sans" fill="#333">10</text>
<text x="247.9" y="480" text-anchor="middle" font-size="12.6" font-family="Liberation Sans" fill="#333">20</text>
<text x="346.1" y="480" text-anchor="middle" font-size="12.6" font-family="Liberation Sans" fill="#333">30</text>
<text x="444.3" y="480" text-anchor="middle" font-size="12.6" font-family="Liberation Sans" fill="#333">40</text>
<text x="542.5" y="480" text-anchor="middle" font-size="12.6" font-family="Liberation Sans" fill="#333">50</text>
<text x="640.7" y="480" text-anchor="middle" font-size="12.6" font-family="Liberation Sans" fill="#333">60</text>
<text x="738.9" y="480" text-anchor="middle" font-size="12.6" font-family="Liberation Sans" fill="#333">70</text>
<text x="837.1" y="480" text-anchor="middle" font-size="12.6" font-family="Liberation Sans" fill="#333">80</text>
<text x="935.3" y="480" text-anchor="middle" font-size="12.6" font-family="Liberation Sans" fill="#333">90</text>
<text x="1033.5" y="480" text-anchor="middle" font-size="12.6" font-family="Liberation Sans" fill="#333">100gB</text>
<rect x="34" y="677" width="1028" height="168" fill="#000"/>
<rect x="36" y="679" width="1025" height="164" fill="url(#cg)"/>
<line x1="70.6" y1="679" x2="70.6" y2="843" stroke="#8a8a8a" stroke-width="1"/>
<line x1="70.6" y1="845" x2="70.6" y2="849" stroke="#888" stroke-width="1"/>
<line x1="138.7" y1="679" x2="138.7" y2="843" stroke="#8a8a8a" stroke-width="1"/>
<line x1="138.7" y1="845" x2="138.7" y2="849" stroke="#888" stroke-width="1"/>
<line x1="206.9" y1="679" x2="206.9" y2="843" stroke="#8a8a8a" stroke-width="1"/>
<line x1="206.9" y1="845" x2="206.9" y2="849" stroke="#888" stroke-width="1"/>
<line x1="275.0" y1="679" x2="275.0" y2="843" stroke="#8a8a8a" stroke-width="1"/>
<line x1="275.0" y1="845" x2="275.0" y2="849" stroke="#888" stroke-width="1"/>
<line x1="343.2" y1="679" x2="343.2" y2="843" stroke="#8a8a8a" stroke-width="1"/>
<line x1="343.2" y1="845" x2="343.2" y2="849" stroke="#888" stroke-width="1"/>
<line x1="411.3" y1="679" x2="411.3" y2="843" stroke="#8a8a8a" stroke-width="1"/>
<line x1="411.3" y1="845" x2="411.3" y2="849" stroke="#888" stroke-width="1"/>
<line x1="479.4" y1="679" x2="479.4" y2="843" stroke="#8a8a8a" stroke-width="1"/>
<line x1="479.4" y1="845" x2="479.4" y2="849" stroke="#888" stroke-width="1"/>
<line x1="547.6" y1="679" x2="547.6" y2="843" stroke="#8a8a8a" stroke-width="1"/>
<line x1="547.6" y1="845" x2="547.6" y2="849" stroke="#888" stroke-width="1"/>
<line x1="615.7" y1="679" x2="615.7" y2="843" stroke="#8a8a8a" stroke-width="1"/>
<line x1="615.7" y1="845" x2="615.7" y2="849" stroke="#888" stroke-width="1"/>
<line x1="683.9" y1="679" x2="683.9" y2="843" stroke="#8a8a8a" stroke-width="1"/>
<line x1="683.9" y1="845" x2="683.9" y2="849" stroke="#888" stroke-width="1"/>
<line x1="752.0" y1="679" x2="752.0" y2="843" stroke="#8a8a8a" stroke-width="1"/>
<line x1="752.0" y1="845" x2="752.0" y2="849" stroke="#888" stroke-width="1"/>
<line x1="820.1" y1="679" x2="820.1" y2="843" stroke="#8a8a8a" stroke-width="1"/>
<line x1="820.1" y1="845" x2="820.1" y2="849" stroke="#888" stroke-width="1"/>
<line x1="888.3" y1="679" x2="888.3" y2="843" stroke="#8a8a8a" stroke-width="1"/>
<line x1="888.3" y1="845" x2="888.3" y2="849" stroke="#888" stroke-width="1"/>
<line x1="956.4" y1="679" x2="956.4" y2="843" stroke="#8a8a8a" stroke-width="1"/>
<line x1="956.4" y1="845" x2="956.4" y2="849" stroke="#888" stroke-width="1"/>
<line x1="1024.6" y1="679" x2="1024.6" y2="843" stroke="#8a8a8a" stroke-width="1"/>
<line x1="1024.6" y1="845" x2="1024.6" y2="849" stroke="#888" stroke-width="1"/>
<line x1="36" y1="679.6" x2="1061" y2="679.6" stroke="#8a8a8a" stroke-width="1"/>
<line x1="36" y1="695.9" x2="1061" y2="695.9" stroke="#4a4a4a" stroke-width="1"/>
<line x1="36" y1="712.2" x2="1061" y2="712.2" stroke="#8a8a8a" stroke-width="1"/>
<line x1="36" y1="728.5" x2="1061" y2="728.5" stroke="#4a4a4a" stroke-width="1"/>
<line x1="36" y1="744.8" x2="1061" y2="744.8" stroke="#8a8a8a" stroke-width="1"/>
<line x1="36" y1="761.1" x2="1061" y2="761.1" stroke="#4a4a4a" stroke-width="1"/>
<line x1="36" y1="777.4" x2="1061" y2="777.4" stroke="#8a8a8a" stroke-width="1"/>
<line x1="36" y1="793.7" x2="1061" y2="793.7" stroke="#4a4a4a" stroke-width="1"/>
<line x1="36" y1="810.0" x2="1061" y2="810.0" stroke="#8a8a8a" stroke-width="1"/>
<line x1="36" y1="826.3" x2="1061" y2="826.3" stroke="#4a4a4a" stroke-width="1"/>
<text x="30" y="684.1" text-anchor="end" font-size="12.6" font-family="Liberation Sans" fill="#333">25</text>
<text x="30" y="716.7" text-anchor="end" font-size="12.6" font-family="Liberation Sans" fill="#333">20</text>
<text x="30" y="749.3" text-anchor="end" font-size="12.6" font-family="Liberation Sans" fill="#333">15</text>
<text x="30" y="781.9" text-anchor="end" font-size="12.6" font-family="Liberation Sans" fill="#333">10</text>
<text x="30" y="814.5" text-anchor="end" font-size="12.6" font-family="Liberation Sans" fill="#333">5</text>
<text x="36" y="672" font-size="12.5" font-family="Liberation Sans" fill="#333">MB/s</text>
<text x="70.6" y="862" text-anchor="middle" font-size="12.6" font-family="Liberation Sans" fill="#333">0.5</text>
<text x="138.7" y="862" text-anchor="middle" font-size="12.6" font-family="Liberation Sans" fill="#333">1</text>
<text x="206.9" y="862" text-anchor="middle" font-size="12.6" font-family="Liberation Sans" fill="#333">2</text>
<text x="275.0" y="862" text-anchor="middle" font-size="12.6" font-family="Liberation Sans" fill="#333">4</text>
<text x="343.2" y="862" text-anchor="middle" font-size="12.6" font-family="Liberation Sans" fill="#333">8</text>
<text x="411.3" y="862" text-anchor="middle" font-size="12.6" font-family="Liberation Sans" fill="#333">16</text>
<text x="479.4" y="862" text-anchor="middle" font-size="12.6" font-family="Liberation Sans" fill="#333">32</text>
<text x="547.6" y="862" text-anchor="middle" font-size="12.6" font-family="Liberation Sans" fill="#333">64</text>
<text x="615.7" y="862" text-anchor="middle" font-size="12.6" font-family="Liberation Sans" fill="#333">128</text>
<text x="683.9" y="862" text-anchor="middle" font-size="12.6" font-family="Liberation Sans" fill="#333">256</text>
<text x="752.0" y="862" text-anchor="middle" font-size="12.6" font-family="Liberation Sans" fill="#333">512</text>
<text x="820.1" y="862" text-anchor="middle" font-size="12.6" font-family="Liberation Sans" fill="#333">1024</text>
<text x="888.3" y="862" text-anchor="middle" font-size="12.6" font-family="Liberation Sans" fill="#333">2048</text>
<text x="956.4" y="862" text-anchor="middle" font-size="12.6" font-family="Liberation Sans" fill="#333">4096</text>
<text x="1024.6" y="862" text-anchor="middle" font-size="12.6" font-family="Liberation Sans" fill="#333">8192</text>
<rect x="981" y="662" width="10" height="10" fill="#1a9ad6"/>
<rect x="1025" y="662" width="10" height="10" fill="#e07010"/>
</svg>
<div class="a" style="left:991px;top:658px;font-size:15px;color:#222">读取</div>
<div class="a" style="left:1035px;top:658px;font-size:15px;color:#222">写入</div>
<!-- table -->
<div class="a" style="left:51px;top:509px;width:937px;height:2px;background:#737373"></div>
<div class="a" style="left:318px;top:486px;width:2px;height:121px;background:#737373"></div>
<div class="a" style="left:440px;top:486px;width:2px;height:121px;background:#737373"></div>
<div class="a lbl" style="left:363px;top:487px">读取</div>
<div class="a lbl" style="left:490px;top:487px">写入</div>
<div class="a lbl" style="left:56px;top:519px">顺序</div>
<div class="a lbl" style="left:55px;top:551px">4KB 随机单</div>
<div class="a lbl" style="left:55px;top:583px">4KB 随机多</div>
<div class="a mono" style="right:792px;top:517px;font-size:15px;letter-spacing:-0.4px">1445340 KB/s</div>
<div class="a mono" style="right:792px;top:550px;font-size:15px;letter-spacing:-0.4px">3711 IOPS</div>
<div class="a mono" style="right:792px;top:580px;font-size:15px;letter-spacing:-0.4px">99529 IOPS</div>
<div class="a mono" style="right:666px;top:517px;font-size:15px;letter-spacing:-0.4px">869119 KB/s</div>
<div class="a mono" style="right:666px;top:550px;font-size:15px;letter-spacing:-0.4px">48795 IOPS</div>
<div class="a mono" style="right:666px;top:580px;font-size:15px;letter-spacing:-0.4px">82886 IOPS</div>
<!-- spin 32 -->
<div class="a" style="left:217px;top:573px;width:50px;height:32px;border:1px solid #b0b0b0;background:#fff"></div>
<div class="a" style="left:222px;top:577px;color:#222;font-size:15.8px">32</div>
<div class="a" style="left:246px;top:575px;width:19px;height:14px;background:#e8e8e8;border:1px solid #c8c8c8"></div>
<div class="a" style="left:246px;top:589px;width:19px;height:14px;background:#e8e8e8;border:1px solid #c8c8c8"></div>
<svg class="a" style="left:246px;top:575px" width="19" height="28"><path d="M6 10 L13 10 L9.5 6 Z M6 18 L13 18 L9.5 22 Z" fill="#222"/></svg>
<!-- separator -->
<div class="a" style="left:13px;top:619px;width:1191px;height:2px;background:#bcbcbc"></div>
<!-- checkbox 2 -->
<div class="a" style="left:57px;top:634px;width:16.5px;height:16.5px;border:2px solid #666;background:#fff"></div>
<div class="a lbl" style="left:78px;top:634px;-webkit-text-stroke:0.3px #222">块大小测量</div>
<!-- right panel -->
<div class="a" style="left:1100px;top:186px;width:108px;height:34px;border:2px solid #2a73c0;background:#e1e1e1;box-shadow:inset 0 0 0 1px #d0e6f8"></div>
<div class="a" style="left:1139px;top:193px;font-size:15px;color:#222">开始</div>
<div class="a lbl" style="left:1099px;top:233px">驱动器</div>
<div class="combo" style="left:1099px;top:262px;width:110px;height:31px"></div>
<div class="a" style="left:1104px;top:267px;color:#222;font-size:15.6px">C:</div>
<div class="chev" style="left:1194px;top:271px"></div>
<div class="a lbl" style="left:1099px;top:309px">文件长度</div>
<div class="a" style="left:1099px;top:347px;width:81px;height:32px;border:1px solid #999;background:#fff"></div>
<div class="a" style="left:1104px;top:351px;color:#333;font-size:15.6px;letter-spacing:-0.15px">100000</div>
<div class="a" style="left:1159px;top:349px;width:19px;height:14px;background:#e6e6e6;border:1px solid #c8c8c8"></div>
<div class="a" style="left:1159px;top:363px;width:19px;height:14px;background:#e6e6e6;border:1px solid #c8c8c8"></div>
<svg class="a" style="left:1159px;top:349px" width="19" height="28"><path d="M5.5 9.5 L12.5 9.5 L9 5.5 Z M5.5 17.5 L12.5 17.5 L9 21.5 Z" fill="#111"/></svg>
<div class="a lbl" style="left:1182px;top:359px;color:#222">MB</div>
<div class="a lbl" style="left:1099px;top:409px">数据模式</div>
<div class="combo" style="left:1099px;top:440px;width:110px;height:31px"></div>
<div class="a lbl" style="left:1104px;top:446px;color:#222">随机</div>
<div class="chev" style="left:1194px;top:449px"></div>
<div class="a lbl" style="left:1100px;top:699px">文件长度</div>
<div class="combo" style="left:1099px;top:732px;width:110px;height:31px"></div>
<div class="a" style="left:1104px;top:737px;color:#222;font-size:15.6px">64 MB</div>
<div class="chev" style="left:1194px;top:741px"></div>
<div class="a lbl" style="left:1100px;top:786px">延迟</div>
<div class="a" style="left:1099px;top:817px;width:81px;height:32px;border:1px solid #888;background:#fff"></div>
<div class="a" style="left:1104px;top:821px;color:#333;font-size:15.6px">0</div>
<div class="a" style="left:1185px;top:814px;width:19px;height:18px;background:#e6e6e6;border:1px solid #c8c8c8"></div>
<div class="a" style="left:1185px;top:831px;width:19px;height:18px;background:#e6e6e6;border:1px solid #c8c8c8"></div>
<svg class="a" style="left:1185px;top:814px" width="19" height="35"><path d="M6 12 L13 12 L9.5 8 Z M6 22 L13 22 L9.5 26 Z" fill="#222"/></svg>
<!-- watermark -->
<div class="a" style="left:1027px;top:848px;font-family:'Liberation Serif',serif;font-size:52px;color:#f3b0ba;letter-spacing:3px;-webkit-text-stroke:1.3px #fff">58codes</div>
</body></html>
